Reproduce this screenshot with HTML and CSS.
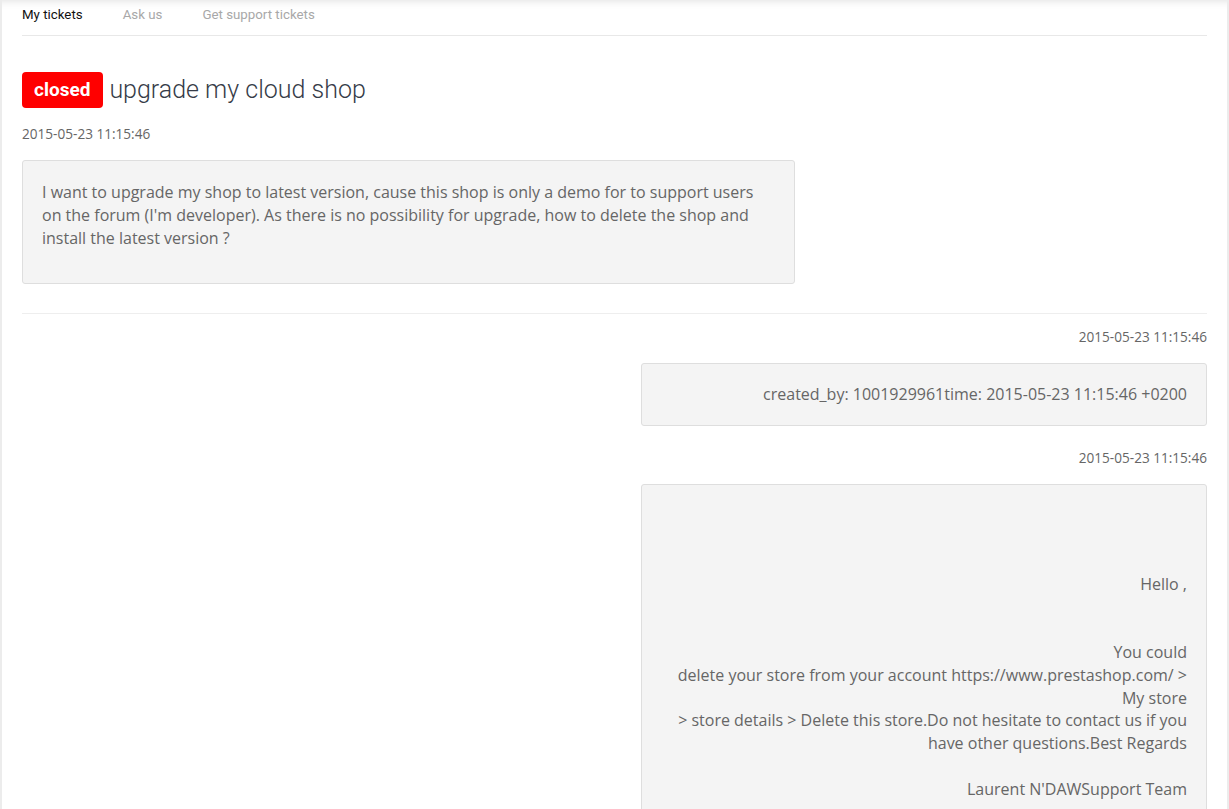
FILE: index.html
```html
<!DOCTYPE html>
<html>
<head>
  <title>Ticket</title>
  <link rel="stylesheet" href="styles.css">
</head>
<body>
  <div class="page">
    <ul class="tabs">
      <li class="active">My tickets</li>
      <li>Ask us</li>
      <li>Get support tickets</li>
    </ul>

    <h1 class="ticket-title"><span class="badge">closed</span> upgrade my cloud shop</h1>
    <div class="date">2015-05-23 11:15:46</div>

    <div class="message">
      I want to upgrade my shop to latest version, cause this shop is only a demo for to support users on the forum (I'm developer). As there is no possibility for upgrade, how to delete the shop and install the latest version ?
    </div>

    <hr class="sep">

    <div class="reply">
      <div class="date">2015-05-23 11:15:46</div>
      <div class="message">created_by: 1001929961time: 2015-05-23 11:15:46 +0200</div>
    </div>

    <div class="reply">
      <div class="date">2015-05-23 11:15:46</div>
      <div class="message">
        <br><br><br>Hello ,<br><br><br>You could<br>delete your store from your account https://www.prestashop.com/ &gt; My store<br>&gt; store details &gt; Delete this store.Do not hesitate to contact us if you have other questions.Best Regards<br><br>Laurent N'DAWSupport Team<br><br>
      </div>
    </div>
  </div>
</body>
</html>
```

FILE: styles.css
```css
html, body {
  margin: 0;
  background-color: #ececec;
}

body {
  font-family: "Open Sans", sans-serif;
  color: #666;
}

.page {
  margin: 0 2px;
  min-height: 809px;
  padding: 0 20px 40px 20px;
  background-color: #fff;
  box-shadow: inset 0 10px 10px -10px rgba(0, 0, 0, 0.15);
}

/* Tabs */
.tabs {
  list-style: none;
  margin: 0;
  padding: 5px 0 10px 0;
  display: flex;
  gap: 40px;
  border-bottom: 1px solid #e8e8e8;
  font-family: Roboto, sans-serif;
  font-size: 13.3px;
  line-height: 20px;
  color: #a8a8a8;
}

.tabs .active {
  color: #111;
}

/* Title */
.ticket-title {
  margin: 36px 0 0 0;
  font-family: Roboto, sans-serif;
  font-weight: 300;
  font-size: 25px;
  line-height: 36px;
  color: #363c48;
  display: flex;
  align-items: center;
  gap: 6px;
}

.badge {
  display: inline-block;
  background-color: #f00;
  color: #fff;
  font-weight: 700;
  font-size: 19px;
  line-height: 36px;
  padding: 0 13px 0 12px;
  border-radius: 4px;
}

.date {
  font-size: 13.6px;
  line-height: 18px;
  color: #666;
}

.ticket-title + .date {
  margin-top: 17px;
}

.message {
  box-sizing: border-box;
  margin-top: 17px;
  width: 773px;
  padding: 20px 19px 34px 19px;
  background-color: #f4f4f4;
  border: 1px solid #dedede;
  border-radius: 3px;
  font-size: 16px;
  line-height: 22.8px;
  color: #666;
}

.sep {
  border: 0;
  border-top: 1px solid #eee;
  margin: 29px 0 14px 0;
}

/* Replies */
.reply {
  display: flex;
  flex-direction: column;
  align-items: flex-end;
  text-align: right;
  margin-bottom: 23px;
}

.reply .message {
  width: 566px;
  margin-top: 17px;
  padding: 19px 19px 19px 19px;
}
```
